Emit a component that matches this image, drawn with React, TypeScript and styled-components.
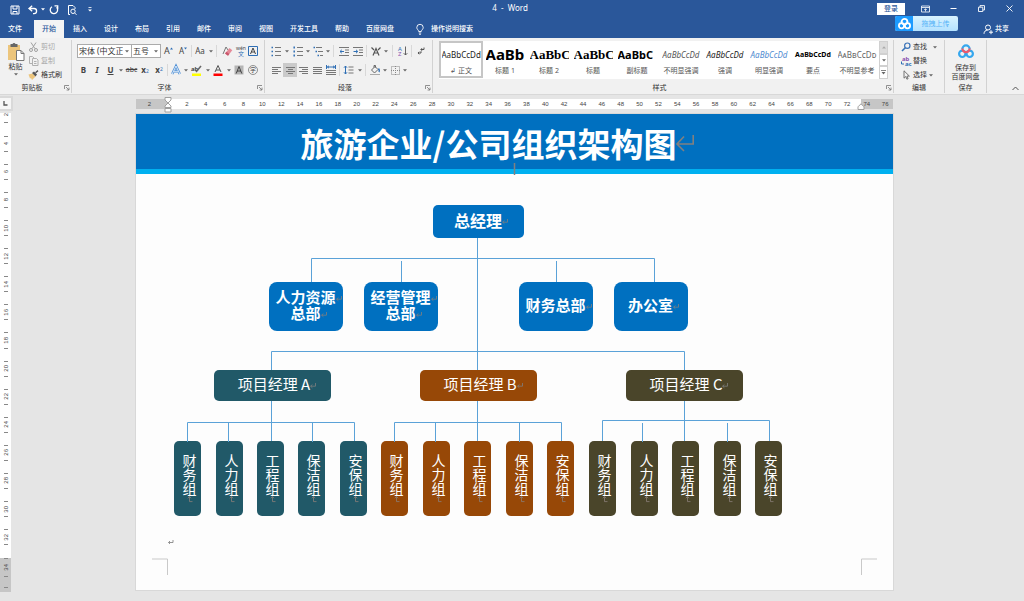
import React from 'react';
import styled, { createGlobalStyle, css } from 'styled-components';

const ui = '"Noto Sans", "Noto Sans CJK SC", sans-serif';
const cjk = '"Noto Sans CJK SC", "Noto Sans", sans-serif';
const blue = '#2a579a';
const line = '#5ba2d8';

const Global = createGlobalStyle`
  * { box-sizing: border-box; }
  body { margin: 0; background: #e5e5e5; font-family: ${ui}; font-size: 7px; color: #333; }
  button, select { font: inherit; color: inherit; border: 0; padding: 0; margin: 0; background: none; }
  svg { display: block; flex: none; overflow: visible; }
`;

const Shell = styled.div`
  display: flex;
  flex-direction: column;
  min-height: 100vh;
`;

/* ---------- title bar and tabs ---------- */

const Header = styled.header`
  position: relative;
  background: ${blue};
  color: #fff;
`;
const TitleBar = styled.div`
  display: grid;
  grid-template-columns: 1fr auto 1fr;
  align-items: center;
  height: 19px;
`;
const QuickAccess = styled.div`
  display: flex;
  align-items: center;
  padding-left: 5px;
`;
const DocName = styled.div`
  font-size: 8px;
  line-height: 16px;
  height: 19px;
  white-space: pre;
  padding-right: 4px;
`;
const WindowTools = styled.div`
  display: flex;
  align-items: center;
  justify-content: flex-end;
  height: 19px;
  padding-bottom: 2px;
`;
const LoginButton = styled.button`
  width: 28px;
  height: 12px;
  line-height: 12px;
  background: #fff;
  color: ${blue};
  font-weight: 500;
  margin-right: 6px;
`;
const Slot = styled.button<{ $w: number; $on?: boolean }>`
  display: flex;
  flex: none;
  align-items: center;
  justify-content: center;
  width: ${p => p.$w}px;
  height: 14px;
  background: ${p => (p.$on ? '#cacaca' : 'transparent')};
`;
const TabRow = styled.nav`
  display: flex;
  align-items: flex-end;
  height: 19px;
`;
const Tab = styled.button<{ $active?: boolean }>`
  height: 18px;
  padding: 0 8px;
  margin-right: 1px;
  font-weight: 500;
  line-height: 16px;
  color: ${p => (p.$active ? blue : '#fff')};
  background: ${p => (p.$active ? '#f4f4f4' : 'transparent')};
`;
const FileTab = styled(Tab)`
  width: 33px;
  text-align: left;
`;
const TellMe = styled(Tab)`
  display: flex;
  align-items: center;
  gap: 7px;
  margin-left: 5px;
`;
const ShareButton = styled(Tab)`
  display: flex;
  align-items: center;
  gap: 2px;
  margin-left: auto;
  padding: 0 14px 0 0;
`;
const Upload = styled.button`
  position: absolute;
  right: 66px;
  top: 16px;
  display: flex;
  width: 63px;
  height: 15px;
  border-radius: 2px;
  overflow: hidden;
  background: linear-gradient(#d9f3ff, #b4e2ff);
  color: #56b2f7;
  line-height: 15px;
`;
const UploadLogo = styled.span`
  display: flex;
  align-items: center;
  justify-content: center;
  width: 18px;
  height: 15px;
  background: #1d9bff;
`;
const UploadText = styled.span`
  flex: 1;
`;

/* ---------- ribbon ---------- */

const Ribbon = styled.div`
  display: flex;
  height: 57px;
  background: #f1f1f1;
  border-bottom: 1px solid #d8d8d8;
  padding: 2px 0 1px;
`;
const Group = styled.section<{ $w?: number }>`
  position: relative;
  display: flex;
  flex-direction: column;
  ${p => (p.$w ? css`flex: none; width: ${p.$w}px;` : css`flex: 1; min-width: 0;`)}
  border-right: 1px solid #d2d2d2;
`;
const GroupBody = styled.div<{ $pad?: number }>`
  display: flex;
  flex: 1;
  padding-left: ${p => p.$pad ?? 0}px;
`;
const GroupFoot = styled.div`
  display: flex;
  align-items: center;
  height: 10px;
  line-height: 10px;
  color: #333;
`;
const GroupLabel = styled.span`
  flex: 1;
  text-align: center;
`;
const Launcher = styled.button`
  width: 7px;
  height: 7px;
  flex: none;
`;
const PasteButton = styled.button`
  display: flex;
  flex-direction: column;
  align-items: center;
  width: 23px;
  padding-top: 2px;
  line-height: 10px;
  gap: 1px;
`;
const List = styled.div`
  display: flex;
  flex-direction: column;
`;
const ListButton = styled.button<{ $off?: boolean }>`
  display: flex;
  align-items: center;
  gap: 2px;
  height: 14px;
  line-height: 14px;
  color: ${p => (p.$off ? '#a8a8a8' : '#333')};
`;
const ToolRows = styled.div`
  display: flex;
  flex-direction: column;
  gap: 5px;
  padding-top: 4px;
`;
const ToolRow = styled.div`
  display: flex;
  align-items: center;
  height: 14px;
`;
const Divider = styled.span<{ $w: number }>`
  flex: none;
  width: ${p => p.$w}px;
  height: 12px;
  background: linear-gradient(#d8d8d8, #d8d8d8) center / 1px 100% no-repeat;
`;
const Space = styled.span<{ $w: number }>`
  flex: none;
  width: ${p => p.$w}px;
`;
const SelectBox = styled.label<{ $w: number }>`
  display: flex;
  align-items: center;
  flex: none;
  width: ${p => p.$w}px;
  height: 14px;
  background: #fff;
  border: 1px solid #ababab;
  & + & { border-left-width: 0; }
`;
const Select = styled.select`
  appearance: none;
  flex: 1;
  min-width: 0;
  height: 12px;
  padding-left: 1px;
  font-size: 8px;
  line-height: 12px;
  overflow: hidden;
  text-overflow: clip;
`;
const CaretHolder = styled.span`
  display: flex;
  justify-content: center;
  width: 8px;
`;
const Glyph = styled.span<{ $c?: string; $size?: number; $bold?: boolean; $italic?: boolean; $deco?: string }>`
  font-size: ${p => p.$size ?? 8}px;
  line-height: 10px;
  color: ${p => p.$c ?? '#444'};
  font-weight: ${p => (p.$bold ? 700 : 400)};
  font-style: ${p => (p.$italic ? 'italic' : 'normal')};
  text-decoration: ${p => p.$deco ?? 'none'};
`;
const Gallery = styled.div`
  display: flex;
  flex: 1;
  height: 38px;
  margin: 1px 5px 0 6px;
  background: #fff;
`;
const StyleCard = styled.button<{ $active?: boolean }>`
  display: flex;
  flex: 1;
  flex-direction: column;
  align-items: center;
  min-width: 0;
  height: 37px;
  border: 2px solid ${p => (p.$active ? '#c6c6c6' : 'transparent')};
`;
const Sample = styled.span<{ $kind: string }>`
  width: 39px;
  height: 23px;
  line-height: 23px;
  overflow: hidden;
  white-space: nowrap;
  text-align: center;
  font-size: 8px;
  color: #222;
  ${p => p.$kind === 'h1' && css`text-align: left; font-size: 15px; font-weight: 700; color: #000;`}
  ${p => p.$kind === 'serif' && css`text-align: left; font-size: 13px; font-weight: 700; font-family: "Liberation Serif", serif; color: #000;`}
  ${p => p.$kind === 'sub' && css`text-align: left; font-size: 11px; font-weight: 700; color: #000;`}
  ${p => p.$kind === 'soft' && css`font-style: italic; color: #555;`}
  ${p => p.$kind === 'em' && css`font-style: italic;`}
  ${p => p.$kind === 'accent' && css`font-style: italic; color: #4f8bd0;`}
  ${p => p.$kind === 'strong' && css`font-size: 7px; font-weight: 700; color: #000;`}
  ${p => p.$kind === 'caps' && css`color: #666;`}
`;
const StyleName = styled.span`
  line-height: 10px;
  color: #555;
  white-space: nowrap;
`;
const Scroller = styled.div`
  display: flex;
  flex-direction: column;
  width: 9px;
`;
const ScrollButton = styled.button<{ $off?: boolean }>`
  display: flex;
  flex: 1;
  align-items: center;
  justify-content: center;
  border: 1px solid #d0d0d0;
  background: ${p => (p.$off ? '#dcdcdc' : '#fff')};
`;
const SaveButton = styled.button`
  display: flex;
  flex: 1;
  flex-direction: column;
  align-items: center;
  padding-top: 3px;
  line-height: 9px;
`;
const SaveText = styled.span`
  margin-top: 4px;
`;
const Collapse = styled.div`
  display: flex;
  align-items: flex-end;
  justify-content: flex-end;
  width: 37px;
  padding: 0 5px 2px 0;
`;

/* ---------- rulers ---------- */

const Workspace = styled.main`
  display: grid;
  grid-template-columns: 11px 1fr;
  grid-template-rows: 18px auto;
  flex: 1;
  align-items: start;
`;
const TabStop = styled.button`
  display: flex;
  align-items: center;
  justify-content: center;
  width: 13px;
  height: 15px;
  margin-top: 1px;
  background: #f6f6f6;
  border: 2px solid #d9d9d9;
  border-left-width: 0;
`;
const RulerLane = styled.div`
  display: flex;
  justify-content: center;
  padding: 4px 7px 0 0;
`;
const Ruler = styled.div`
  position: relative;
  display: flex;
  width: 757px;
  height: 10px;
  font-size: 6px;
  line-height: 11px;
  color: #444;
  font-family: "Liberation Sans", sans-serif;
`;
const RulerMargin = styled.div`
  display: flex;
  justify-content: space-between;
  width: 32px;
  padding: 0 4px 0 3px;
  background: #c6c6c6;
`;
const RulerStart = styled(RulerMargin)`
  justify-content: center;
  padding: 0 4px 0 0;
`;
const RulerScale = styled.div`
  display: flex;
  flex: 1;
  padding: 0 4px 0 10px;
  background: #fff;
`;
const Mark = styled.span`
  flex: 1;
  width: 0;
  text-align: center;
`;
const IndentLeft = styled.svg`
  position: absolute;
  left: 28px;
  top: -2px;
`;
const IndentRight = styled.svg`
  position: absolute;
  right: 28px;
  top: 4px;
`;
const SideRuler = styled.div`
  display: flex;
  flex-direction: column;
  height: 479px;
  font-family: "Liberation Sans", sans-serif;
  font-size: 6px;
  line-height: 8px;
  color: #444;
`;
const SideScale = styled.div`
  display: flex;
  flex: 1;
  flex-direction: column;
  min-height: 0;
  padding-bottom: 7px;
  background: #fff;
`;
const SideMargin = styled.div`
  height: 34px;
  background: #c6c6c6;
`;
const SideMark = styled.div<{ $first?: boolean }>`
  display: flex;
  flex-direction: column;
  align-items: center;
  justify-content: space-between;
  ${p => (p.$first ? css`height: 17px; flex: none; padding-bottom: 7px;` : css`flex: 1; padding: 6px 0;`)}
`;
const SideMarginMark = styled.div`
  display: flex;
  flex-direction: column;
  align-items: center;
  justify-content: space-between;
  height: 30px;
`;
const Dash = styled.i`
  width: 4px;
  height: 1px;
  background: #888;
`;
const SideNumber = styled.span`
  writing-mode: vertical-rl;
  transform: rotate(180deg);
  width: 8px;
`;

/* ---------- document ---------- */

const Canvas = styled.div`
  display: flex;
  justify-content: center;
  padding: 1px 7px 11px 0;
`;
const Page = styled.article`
  position: relative;
  width: 757px;
  height: 476px;
  background: #fdfdfd;
  box-shadow: 0 0 0 1px #d8d8d8;
  font-family: ${cjk};
`;
const Banner = styled.div`
  display: flex;
  align-items: center;
  justify-content: center;
  height: 60px;
  padding: 3px 33px 0 0;
  background: #0070c0;
  border-bottom: 5px solid #00b0f0;
`;
const Title = styled.h1`
  margin: 0;
  font-size: 33px;
  line-height: 40px;
  font-weight: 700;
  color: #fff;
  white-space: nowrap;
`;
const Drawing = styled.svg`
  position: absolute;
  left: 0;
  top: 0;
`;
const Node = styled.div<{ $x: number; $y: number }>`
  position: absolute;
  left: ${p => p.$x}px;
  top: ${p => p.$y}px;
  display: flex;
  align-items: center;
  justify-content: center;
  padding-bottom: 3px;
  color: #fff;
`;
const Chief = styled(Node)`
  width: 91px;
  height: 33px;
  border-radius: 5px;
  background: #0070c0;
  font-size: 16px;
  line-height: 20px;
  font-weight: 700;
`;
const Department = styled(Node)`
  flex-direction: column;
  width: 74px;
  height: 49px;
  border-radius: 8px;
  background: #0070c0;
  font-size: 15px;
  line-height: 16px;
  font-weight: 700;
`;
const Manager = styled(Node)<{ $color: string }>`
  width: 117px;
  height: 31px;
  padding-left: 4px;
  border-radius: 5px;
  background: ${p => p.$color};
  font-size: 15px;
  line-height: 20px;
`;
const Team = styled(Node)<{ $color: string }>`
  justify-content: flex-start;
  width: 27px;
  height: 75px;
  padding: 13px 0 0 5px;
  border-radius: 5px;
  background: ${p => p.$color};
  font-size: 14px;
  line-height: 20px;
  writing-mode: vertical-rl;
`;
const Words = styled.span`
  position: relative;
  white-space: nowrap;
`;
const MarkAfter = styled.svg`
  position: absolute;
  left: 100%;
  top: calc(50% - 1px);
`;
const MarkBelow = styled.svg`
  position: absolute;
  top: 100%;
  left: calc(50% - 3px);
`;

/* ---------- icons ---------- */

type IconProps = { w?: number; h?: number; c?: string; sw?: number; children: React.ReactNode };
const Icon = ({ w = 10, h = 10, c = '#555', sw = 1, children }: IconProps) => (
  <svg width={w} height={h} viewBox={`0 0 ${w} ${h}`} fill="none" stroke={c} strokeWidth={sw} aria-hidden="true">
    {children}
  </svg>
);
const Caret = ({ c = '#666' }: { c?: string }) => (
  <Icon w={4} h={3} c="none"><path d="M0 0.3h4L2 2.6z" fill={c} /></Icon>
);
const CaretSlot = ({ w, c, label = '更多' }: { w: number; c?: string; label?: string }) => (
  <Slot $w={w} aria-label={label}><Caret c={c} /></Slot>
);
const Lines = ({ rows }: { rows: [number, number][] }) => (
  <Icon w={9} h={9} c="#777">
    {rows.map(([a, b], i) => <path key={i} d={`M${a} ${i * 2 + 1.5}H${b}`} />)}
  </Icon>
);
const LauncherIcon = () => (
  <Icon w={6} h={6} c="#777" sw={0.8}><path d="M0.5 4V0.5H5M2 2l3 3M5 2.6V5H2.6" /></Icon>
);
const Pan = ({ size, colors }: { size: number; colors: [string, string, string] }) => (
  <svg width={size} height={size} viewBox="0 0 16 16" fill="none" strokeWidth="2.2" aria-hidden="true">
    <circle cx="4.3" cy="10.8" r="3.2" stroke={colors[0]} />
    <circle cx="11.7" cy="10.8" r="3.2" stroke={colors[1]} />
    <path d="M4.4 6A3.600 3.600 0 0 1 11.600 6" stroke={colors[0]} />
    <path d="M4.400 5.500A3.600 3.600 0 0 0 8 9.200A3.600 3.600 0 0 0 11.600 5.500" stroke={colors[2]} />
  </svg>
);
const Return = () => (
  <MarkAfter width="6" height="6" viewBox="0 0 6 6" fill="none" stroke="#7f7f7f" strokeWidth="0.8">
    <path d="M5.5 0v3.2H0.6M2.4 1.5L0.6 3.2L2.4 4.8" />
  </MarkAfter>
);
const ReturnDown = () => (
  <MarkBelow width="6" height="7" viewBox="0 0 6 7" fill="none" stroke="#8a7f78" strokeWidth="0.8">
    <path d="M5.500 5.600H2.500V0.600M0.800 2.200L2.500 0.600L4.200 2.200" />
  </MarkBelow>
);

/* ---------- data ---------- */

const tabs = ['插入', '设计', '布局', '引用', '邮件', '审阅', '视图', '开发工具', '帮助', '百度网盘'];

const styleCards = [
  { name: '标题 1', kind: 'h1', text: 'AaBb' },
  { name: '标题 2', kind: 'serif', text: 'AaBbC' },
  { name: '标题', kind: 'serif', text: 'AaBbC' },
  { name: '副标题', kind: 'sub', text: 'AaBbC' },
  { name: '不明显强调', kind: 'soft', text: 'AaBbCcDd' },
  { name: '强调', kind: 'em', text: 'AaBbCcDd' },
  { name: '明显强调', kind: 'accent', text: 'AaBbCcDd' },
  { name: '要点', kind: 'strong', text: 'AaBbCcDd' },
  { name: '不明显参考', kind: 'caps', text: 'AᴀBʙCᴄDᴅ' },
];

const departments = [
  { x: 133, lines: ['人力资源', '总部'] },
  { x: 228, lines: ['经营管理', '总部'] },
  { x: 383, lines: ['财务总部'] },
  { x: 478, lines: ['办公室'] },
];

const branches = [
  { name: '项目经理 A', color: '#215968', x: 78, teams: [38, 80, 121, 162, 204] },
  { name: '项目经理 B', color: '#974807', x: 284, teams: [245, 287, 328, 370, 411] },
  { name: '项目经理 C', color: '#4a452a', x: 490, teams: [453, 495, 536, 578, 619] },
];

const teamNames = ['财务组', '人力组', '工程组', '保洁组', '安保组'];

const connectors = [
  'M341.5 124V256', 'M175.5 168V144.5H518.5V168', 'M265.5 147V168', 'M420.5 147V168',
  'M135.5 256V237.5H548.5V256',
  'M135.5 287V327', 'M51.5 328V308.5H218.5V327', 'M92.5 309V328', 'M176.5 309V328',
  'M341.5 287V327', 'M258.5 328V308.5H425.5V327', 'M299.5 309V328', 'M383.5 309V328',
  'M548.5 287V327', 'M466.5 327V306.5H633.5V327', 'M506.5 309V328', 'M591.5 309V328',
];

const even = (from: number, to: number) =>
  Array.from({ length: (to - from) / 2 + 1 }, (_, i) => from + i * 2);

/* ---------- parts ---------- */

const Foot = ({ label, launcher }: { label: string; launcher?: boolean }) => (
  <GroupFoot>
    <GroupLabel>{label}</GroupLabel>
    {launcher && <Launcher aria-label={`${label}设置`}><LauncherIcon /></Launcher>}
  </GroupFoot>
);

const TopBar = () => (
  <Header>
    <TitleBar>
      <QuickAccess>
        <Slot $w={19} aria-label="保存">
          <Icon c="#fff"><path d="M1 1h8v8H1zM3 1v3h4V1M3 9V6.500h4V9" /></Icon>
        </Slot>
        <Slot $w={17} aria-label="撤消">
          <Icon c="#fff" sw={1.3}><path d="M4.200 0.800L1 3.500l3.200 2.700M1.200 3.500H6a2.600 2.600 0 0 1 0 5.200H5" /></Icon>
        </Slot>
        <CaretSlot w={4} c="#fff" />
        <Slot $w={18} aria-label="重做">
          <Icon c="#fff" sw={1.3}><path d="M3 1.700A3.700 3.700 0 1 0 7.600 2.300M5.500 0.800h3.200V4" /></Icon>
        </Slot>
        <Slot $w={18} aria-label="打印预览">
          <Icon c="#fff"><path d="M3 9.500H1.500v-9h4.500l2 2v1.500M9.500 9.800L7.800 8.100" /><circle cx="6" cy="6.300" r="2.200" /></Icon>
        </Slot>
        <Slot $w={17} aria-label="自定义">
          <Icon w={4} h={5} c="#fff" sw={0.8}><path d="M0.500 0.500h3" /><path d="M0 2.500h4L2 4.600z" fill="#fff" stroke="none" /></Icon>
        </Slot>
      </QuickAccess>
      <DocName>4  -  Word</DocName>
      <WindowTools>
        <LoginButton>登录</LoginButton>
        <Slot $w={28} aria-label="功能区显示选项">
          <Icon w={9} h={8} c="#fff" sw={0.8}><path d="M0.500 1h8v6h-8zM0.500 2.500h8M4.500 6.500V3.800M3.200 5l1.300-1.300L5.800 5" /></Icon>
        </Slot>
        <Slot $w={28} aria-label="最小化"><Icon w={7} h={3} c="#fff"><path d="M0.500 1.500h6" /></Icon></Slot>
        <Slot $w={28} aria-label="还原">
          <Icon w={7} h={7} c="#fff" sw={0.9}><path d="M0.500 2.200h4.300v4.300H0.500zM2 2.200V0.600h4.500V5H4.800" /></Icon>
        </Slot>
        <Slot $w={29} aria-label="关闭"><Icon w={7} h={7} c="#fff" sw={0.9}><path d="M0.500 0.500l6 6M6.500 0.500l-6 6" /></Icon></Slot>
      </WindowTools>
    </TitleBar>
    <TabRow>
      <FileTab>文件</FileTab>
      <Tab $active>开始</Tab>
      {tabs.map(t => <Tab key={t}>{t}</Tab>)}
      <TellMe>
        <Icon w={8} h={11} c="#fff" sw={0.9}>
          <path d="M2.700 7.500C2.700 6 0.800 5.500 0.800 3.500a3.200 3.200 0 0 1 6.400 0C7.200 5.500 5.300 6 5.300 7.500zM2.800 9h2.400M3.200 10.400h1.600" />
        </Icon>
        操作说明搜索
      </TellMe>
      <ShareButton>
        <Icon c="#fff"><circle cx="5" cy="3.500" r="2.500" /><path d="M1 9.800C1 7.500 2.500 6.200 4.600 6.200M6 8.200h4M8 6.200v4" /></Icon>
        共享
      </ShareButton>
    </TabRow>
    <Upload>
      <UploadLogo><Pan size={13} colors={['#fff', '#fff', '#fff']} /></UploadLogo>
      <UploadText>拖拽上传</UploadText>
    </Upload>
  </Header>
);

const ClipboardGroup = () => (
  <Group $w={72}>
    <GroupBody $pad={4}>
      <PasteButton>
        <Icon w={18} h={19} c="none">
          <path d="M1 3h12v15H1z" fill="#ecc57c" />
          <path d="M3.500 2h2a1.600 1.600 0 0 1 3 0h2v3h-7z" fill="#666" />
          <path d="M9.500 8.500h4.500l3 3v7H9.500z" fill="#fff" stroke="#777" />
          <path d="M14 8.500v3h3" stroke="#777" />
        </Icon>
        粘贴
        <Caret />
      </PasteButton>
      <List>
        <ListButton $off>
          <Icon w={12} c="#a0a0a0"><path d="M4 0.500l4 6.200M9 0.500L5 6.700" /><circle cx="4" cy="8" r="1.500" /><circle cx="9" cy="8" r="1.500" /></Icon>
          剪切
        </ListButton>
        <ListButton $off>
          <Icon w={12} c="#b0b0b0"><path d="M2.500 7.500v-7h3l2 2v0M2.500 7.500H5M5.500 2.500h4l1.500 1.500v5.500H5.500zM7 5.500h2.500M7 7.500h2.500" /></Icon>
          复制
        </ListButton>
        <ListButton>
          <Icon w={12} c="none">
            <path d="M1.500 4.500l4-1 3 3-3.500 3.500-1-2-1 0.500z" fill="#ecc57c" />
            <path d="M5 3l2-1.500 3 3L8.500 6.500z" fill="#555" />
            <path d="M8.500 2.800L11 0.600" stroke="#555" strokeWidth="1.400" />
          </Icon>
          格式刷
        </ListButton>
      </List>
    </GroupBody>
    <Foot label="剪贴板" launcher />
  </Group>
);

const FontGroup = () => (
  <Group $w={193}>
    <GroupBody $pad={5}>
      <ToolRows>
        <ToolRow>
          <SelectBox $w={55}>
            <Select aria-label="字体"><option>宋体 (中文正文)</option></Select>
            <CaretHolder><Caret /></CaretHolder>
          </SelectBox>
          <SelectBox $w={29}>
            <Select aria-label="字号"><option>五号</option></Select>
            <CaretHolder><Caret /></CaretHolder>
          </SelectBox>
          <Slot $w={15} aria-label="增大字号">
            <Glyph $size={9}>A</Glyph><Icon w={3} h={8} c="none"><path d="M0 2.500h3L1.500 0.500z" fill="#2f6fb5" /></Icon>
          </Slot>
          <Slot $w={14} aria-label="减小字号">
            <Glyph>A</Glyph><Icon w={3} h={8} c="none"><path d="M0 0.500h3L1.500 2.500z" fill="#2f6fb5" /></Icon>
          </Slot>
          <Divider $w={3} />
          <Slot $w={14} aria-label="更改大小写"><Glyph>Aa</Glyph></Slot>
          <CaretSlot w={7} />
          <Divider $w={4} />
          <Slot $w={17} aria-label="清除格式">
            <Icon c="none"><path d="M1 8L4 1l2 3" stroke="#777" /><path d="M3 7.500L7.500 2l2.800 2.200-4.300 5.600z" fill="#e58a98" /><path d="M3 7.500L4.500 5.700l2.800 2.200L6 9.800z" fill="#c9566b" /></Icon>
          </Slot>
          <Slot $w={11} aria-label="拼音指南">
            <Icon c="none">
              <text x="0" y="4" fontSize="5" fill="#444">wén</text>
              <text x="2" y="10" fontSize="6" fill="#2f6fb5">文</text>
            </Icon>
          </Slot>
          <Slot $w={13} aria-label="字符边框">
            <Icon c="#2f6fb5"><path d="M0.500 0.500h9v9h-9z" /><path d="M2.500 8L5 2l2.500 6M3.300 6h3.400" stroke="#444" /></Icon>
          </Slot>
        </ToolRow>
        <ToolRow>
          <Slot $w={13} aria-label="加粗"><Glyph $bold>B</Glyph></Slot>
          <Slot $w={14} aria-label="倾斜"><Glyph $italic $bold>I</Glyph></Slot>
          <Slot $w={13} aria-label="下划线"><Glyph $bold $deco="underline">U</Glyph></Slot>
          <CaretSlot w={8} />
          <Slot $w={13} aria-label="删除线"><Glyph $size={7} $deco="line-through">abc</Glyph></Slot>
          <Slot $w={14} aria-label="下标"><Glyph $bold>x</Glyph><Glyph $size={6} $c="#2f6fb5"><sub>2</sub></Glyph></Slot>
          <Slot $w={14} aria-label="上标"><Glyph $bold>x</Glyph><Glyph $size={6} $c="#2f6fb5"><sup>2</sup></Glyph></Slot>
          <Divider $w={3} />
          <Slot $w={14} aria-label="文本效果">
            <Icon c="none">
              <path d="M1.200 9L5 1l3.800 8M2.800 6.300h4.400" stroke="#4d8fd6" strokeWidth="2.400" />
              <path d="M1.200 9L5 1l3.800 8M2.800 6.300h4.400" stroke="#fff" strokeWidth="0.800" />
            </Icon>
          </Slot>
          <CaretSlot w={6} />
          <Slot $w={15} aria-label="突出显示">
            <Icon w={11} h={11} c="none">
              <text x="0" y="6" fontSize="6" fontWeight="700" fill="#444">ab</text>
              <path d="M5 7L10 1" stroke="#666" strokeWidth="1.500" /><path d="M1 8.500h9v2.500H1z" fill="#ffff00" />
            </Icon>
          </Slot>
          <CaretSlot w={7} />
          <Slot $w={14} aria-label="字体颜色">
            <Icon h={11} c="none"><path d="M2 7L5 0.500 8 7M3 5h4" stroke="#555" /><path d="M0.500 8.500h9v2.500h-9z" fill="#f00" /></Icon>
          </Slot>
          <CaretSlot w={7} />
          <Slot $w={14} aria-label="字符底纹">
            <Icon c="none"><path d="M0.500 0.500h9v9h-9z" fill="#b5b5b5" /><path d="M2.200 8.500L5 1.500l2.800 7M3 6h4" stroke="#444" /></Icon>
          </Slot>
          <Slot $w={13} aria-label="带圈字符">
            <Icon c="none"><circle cx="5" cy="5" r="4.500" stroke="#777" strokeWidth="0.800" /><text x="2" y="7.200" fontSize="6" fill="#444">字</text></Icon>
          </Slot>
        </ToolRow>
      </ToolRows>
    </GroupBody>
    <Foot label="字体" launcher />
  </Group>
);

const DotLines = ({ marks }: { marks: string }) => (
  <Icon h={9} c="#777">
    <path d="M4 0.500h6M4 4.500h6M4 8.500h6" />
    <path d={marks} stroke="#2f6fb5" strokeWidth="1.500" />
  </Icon>
);

const ParagraphGroup = () => (
  <Group $w={168}>
    <GroupBody $pad={4}>
      <ToolRows>
        <ToolRow>
          <Slot $w={14} aria-label="项目符号"><DotLines marks="M0.500 0.500h1.500M0.500 4.500h1.500M0.500 8.500h1.500" /></Slot>
          <CaretSlot w={7} />
          <Slot $w={15} aria-label="编号"><DotLines marks="M1.200 -0.500v2M1.200 3.500v2M1.200 7.500v2" /></Slot>
          <CaretSlot w={6} />
          <Slot $w={13} aria-label="多级列表">
            <Icon h={9} c="#777"><path d="M3 0.500h6M5 4.500h5M7 8.500h3" /><path d="M0.500 0.500h1.500M2.500 4.500h1.500M4.500 8.500h1.500" stroke="#2f6fb5" strokeWidth="1.500" /></Icon>
          </Slot>
          <CaretSlot w={7} />
          <Divider $w={5} />
          <Slot $w={15} aria-label="减少缩进">
            <Icon h={9} c="#777"><path d="M0 0.500h10M6 3h4M6 5.500h4M0 8.500h10" /><path d="M5 4.500H1M2.800 2.800L1 4.500l1.800 1.700" stroke="#2f6fb5" /></Icon>
          </Slot>
          <Slot $w={13} aria-label="增加缩进">
            <Icon h={9} c="#777"><path d="M0 0.500h10M6 3h4M6 5.500h4M0 8.500h10" /><path d="M0.500 4.500h4M3 2.800l1.800 1.700L3 6.200" stroke="#2f6fb5" /></Icon>
          </Slot>
          <Divider $w={5} />
          <Slot $w={14} aria-label="中文版式">
            <Icon h={9} c="#555" sw={1.2}><path d="M2 8.500L5 1.500l3 7M3 6h4" /><path d="M0.500 0.500L3 3M9.500 0.500L7 3" stroke="#555" /></Icon>
          </Slot>
          <CaretSlot w={6} />
          <Divider $w={6} />
          <Slot $w={15} aria-label="排序">
            <Icon c="none">
              <text x="0" y="5" fontSize="6" fill="#2f6fb5">A</text><text x="0" y="10" fontSize="6" fill="#8a4fb0">Z</text>
              <path d="M7.500 0.500v8.500M5.700 7.200l1.800 1.800 1.800-1.800" stroke="#555" strokeWidth="0.900" />
            </Icon>
          </Slot>
          <Divider $w={3} />
          <Slot $w={16} aria-label="显示编辑标记">
            <Icon w={8} h={8} c="#555"><path d="M7 0.500v2H4M5 1.200L3.800 2.500 5 3.800M4 4.200v1.800H1M2.200 4.700L1 6l1.200 1.300" /></Icon>
          </Slot>
        </ToolRow>
        <ToolRow>
          <Slot $w={14} aria-label="左对齐"><Lines rows={[[0, 9], [0, 6], [0, 9], [0, 6]]} /></Slot>
          <Slot $w={14} $on aria-label="居中"><Lines rows={[[0, 9], [2, 7], [0, 9], [2, 7]]} /></Slot>
          <Slot $w={13} aria-label="右对齐"><Lines rows={[[0, 9], [3, 9], [0, 9], [3, 9]]} /></Slot>
          <Slot $w={14} aria-label="两端对齐"><Lines rows={[[0, 9], [0, 9], [0, 9], [0, 9]]} /></Slot>
          <Slot $w={13} aria-label="分散对齐">
            <Icon c="#2f6fb5"><path d="M0.500 0v4M9.500 0v4M1 2h8M3 0.800L1.500 2 3 3.200M7 0.800L8.500 2 7 3.200" /><path d="M0 5.500h10M0 7.500h10M0 9.500h10" stroke="#777" /></Icon>
          </Slot>
          <Divider $w={5} />
          <Slot $w={14} aria-label="行距">
            <Icon c="#777"><path d="M4.500 2h5M4.500 5h5M4.500 8h5" /><path d="M1.500 1v8M0 2.700L1.500 1 3 2.700M0 7.300L1.500 9 3 7.300" stroke="#2f6fb5" /></Icon>
          </Slot>
          <CaretSlot w={7} />
          <Divider $w={5} />
          <Slot $w={14} aria-label="底纹">
            <Icon c="#666"><path d="M1.500 5L5 1.500l3 3L4.500 8zM4 2.500V0.500h1.500v2" /><path d="M8.500 3.500q1.500 2 0.500 3.500" stroke="#2f6fb5" strokeWidth="1.500" /><path d="M0 9.500h10" stroke="#aaa" /></Icon>
          </Slot>
          <CaretSlot w={6} />
          <Slot $w={14} aria-label="边框">
            <Icon w={9} h={9} c="#888"><path d="M0.500 0.500h8v8h-8zM4.500 0v9M0 4.500h9" strokeDasharray="1 1" /></Icon>
          </Slot>
          <CaretSlot w={6} />
        </ToolRow>
      </ToolRows>
    </GroupBody>
    <Foot label="段落" launcher />
  </Group>
);

const StylesGroup = () => (
  <Group>
    <GroupBody>
      <Gallery>
        <StyleCard $active>
          <Sample $kind="body">AaBbCcDd</Sample>
          <StyleName>↲ 正文</StyleName>
        </StyleCard>
        {styleCards.map(s => (
          <StyleCard key={s.name}>
            <Sample $kind={s.kind}>{s.text}</Sample>
            <StyleName>{s.name}</StyleName>
          </StyleCard>
        ))}
        <Scroller>
          <ScrollButton $off aria-label="上一行"><Icon w={4} h={3} c="none"><path d="M0 2.600h4L2 0.300z" fill="#aaa" /></Icon></ScrollButton>
          <ScrollButton aria-label="下一行"><Caret /></ScrollButton>
          <ScrollButton aria-label="全部样式"><Icon w={5} h={5} c="#666" sw={0.8}><path d="M0 0.500h5" /><path d="M0.500 2h4L2.500 4.400z" fill="#666" stroke="none" /></Icon></ScrollButton>
        </Scroller>
      </Gallery>
    </GroupBody>
    <Foot label="样式" launcher />
  </Group>
);

const EditGroup = () => (
  <Group $w={51}>
    <GroupBody $pad={7}>
      <List>
        <ListButton>
          <Icon c="#3b74b8" sw={1.2}><circle cx="6.300" cy="3.700" r="2.700" /><path d="M4.300 5.700L1 9" strokeWidth="1.600" /></Icon>
          查找<Space $w={2} /><Caret />
        </ListButton>
        <ListButton>
          <Icon c="none">
            <text x="1" y="5" fontSize="6" fontWeight="700" fill="#8a4fb0">ab</text>
            <text x="4" y="10" fontSize="6" fontWeight="700" fill="#2f6fb5">ac</text>
            <path d="M0.500 5.500v2.500h2.500" stroke="#2f6fb5" />
          </Icon>
          替换
        </ListButton>
        <ListButton>
          <Icon c="#666" sw={0.9}><path d="M3 0.800v7.400l1.800-1.700 1.100 2.700 1.200-0.500L6 6.100h2.400z" /></Icon>
          选择<Caret />
        </ListButton>
      </List>
    </GroupBody>
    <Foot label="编辑" />
  </Group>
);

const HorizontalRuler = () => (
  <RulerLane>
    <Ruler>
      <RulerStart>2</RulerStart>
      <RulerScale>{even(2, 72).map(n => <Mark key={n}>{n}</Mark>)}</RulerScale>
      <RulerMargin><span>74</span><span>76</span></RulerMargin>
      <IndentLeft width="8" height="16" viewBox="0 0 8 16" fill="#fdfdfd" stroke="#a0a0a0">
        <path d="M1 0.500h6v2.500L4 6 1 3zM1 10.500V9l3-3 3 3v1.500zM1 11.500h6v3.500H1z" />
      </IndentLeft>
      <IndentRight width="8" height="7" viewBox="0 0 8 7" fill="#fdfdfd" stroke="#a0a0a0">
        <path d="M1 6.500V3.800L4 0.800l3 3v2.700z" />
      </IndentRight>
    </Ruler>
  </RulerLane>
);

const VerticalRuler = () => (
  <SideRuler>
    <SideScale>
      <SideMark $first><SideNumber>2</SideNumber><Dash /></SideMark>
      {even(4, 32).map(n => (
        <SideMark key={n}><Dash /><SideNumber>{n}</SideNumber><Dash /></SideMark>
      ))}
    </SideScale>
    <SideMargin>
      <SideMarginMark><Dash /><SideNumber>34</SideNumber><Dash /><Space $w={1} /><Dash /></SideMarginMark>
    </SideMargin>
  </SideRuler>
);

const Chart = () => (
  <Page>
    <Banner>
      <Title>旅游企业/公司组织架构图</Title>
      <Icon w={18} h={18} c="#808080" sw={1.6}><path d="M17.200 1v9H1M8 2.500L1 10l7 7" /></Icon>
    </Banner>
    <Chief $x={297} $y={91}><Words>总经理<Return /></Words></Chief>
    {departments.map(d => (
      <Department key={d.x} $x={d.x} $y={168}>
        {d.lines.map(l => <Words key={l}>{l}<Return /></Words>)}
      </Department>
    ))}
    {branches.map(b => (
      <React.Fragment key={b.name}>
        <Manager $x={b.x} $y={256} $color={b.color}><Words>{b.name}<Return /></Words></Manager>
        {b.teams.map((x, i) => (
          <Team key={x} $x={x} $y={327} $color={b.color}><Words>{teamNames[i]}<ReturnDown /></Words></Team>
        ))}
      </React.Fragment>
    ))}
    <Drawing width="757" height="476" viewBox="0 0 757 476" fill="none" aria-hidden="true">
      {connectors.map(d => <path key={d} d={d} stroke={line} />)}
      <path d="M378.500 49v12" stroke="#808080" strokeWidth="1.500" />
      <path d="M37 426v2.500H32.500M34 427l-1.500 1.500L34 430" stroke="#888" strokeWidth="0.900" />
      <path d="M16 445h15.500v16M741 445H725.500v16" stroke="#c9c9c9" />
    </Drawing>
  </Page>
);

export default function App() {
  return (
    <Shell>
      <Global />
      <TopBar />
      <Ribbon>
        <ClipboardGroup />
        <FontGroup />
        <ParagraphGroup />
        <StylesGroup />
        <EditGroup />
        <Group $w={42}>
          <GroupBody>
            <SaveButton>
              <Pan size={16} colors={['#35a7ee', '#35a7ee', '#ee5a6d']} />
              <SaveText>保存到<br />百度网盘</SaveText>
            </SaveButton>
          </GroupBody>
          <Foot label="保存" />
        </Group>
        <Collapse>
          <button aria-label="折叠功能区"><Icon w={7} h={5} c="#555"><path d="M0.500 4L3.500 1l3 3" /></Icon></button>
        </Collapse>
      </Ribbon>
      <Workspace>
        <TabStop aria-label="制表符"><Icon w={5} h={5} c="#555" sw={1.3}><path d="M1 0v4h3.500" /></Icon></TabStop>
        <HorizontalRuler />
        <VerticalRuler />
        <Canvas><Chart /></Canvas>
      </Workspace>
    </Shell>
  );
}
